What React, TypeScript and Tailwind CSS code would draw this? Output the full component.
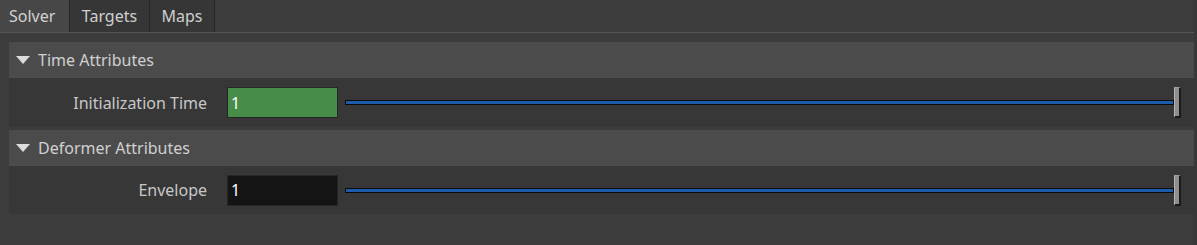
import React from "react";

const font = { fontFamily: '"Noto Sans", "Open Sans", sans-serif' };

function Slider() {
  return (
    <div className="flex-1 flex items-center h-[30px] pl-[7px] pr-[13px]">
      <div className="flex-1 h-[5px] bg-[#1d5cab] border border-[#0b0b0b]" />
      <div className="w-[7px] h-[31px] bg-[#8e8e8e] border-l border-l-[#b5b5b5] border-r-2 border-r-[#1a1a1a] border-b-2 border-b-[#1a1a1a] border-t border-t-[#9a9a9a]" />
    </div>
  );
}

function Header({ title }: { title: string }) {
  return (
    <div className="h-[36px] bg-[#4b4b4b] flex items-center">
      <svg width="14" height="9" viewBox="0 0 14 9" className="ml-[7px] mr-[8px]">
        <polygon points="0,0 14,0 7,8" fill="#dcdcdc" />
      </svg>
      <span className="text-[16px] text-[#d0d0d0]">{title}</span>
    </div>
  );
}

function Row({ label, green, h }: { label: string; green?: boolean; h: string }) {
  return (
    <div className={`${h} bg-[#373737] flex items-center`}>
      <div className="w-[198px] text-right text-[16px] text-[#c8c8c8]">{label}</div>
      <div
        className={`ml-[20px] w-[111px] h-[31px] border border-[#262626] flex items-center pl-[3px] text-[16px] text-white ${
          green ? "bg-[#478c49]" : "bg-[#141414]"
        }`}
      >
        1
      </div>
      <Slider />
    </div>
  );
}

export default function App() {
  return (
    <div className="w-[1197px] h-[245px] bg-[#3c3c3c] flex" style={font}>
      <div className="w-[1194px] flex flex-col">
        <div className="h-[32px] flex">
          <div className="w-[69px] bg-[#474747] flex items-center pl-[9px] text-[16px] text-[#d2d2d2]">Solver</div>
          <div className="w-[81px] bg-[#363636] border-x border-[#262626] flex items-center justify-center text-[16px] text-[#cfcfcf]">Targets</div>
          <div className="w-[65px] bg-[#363636] border-r border-[#262626] flex items-center justify-center text-[16px] text-[#cfcfcf]">Maps</div>
        </div>
        <div className="h-px bg-[#565656]" />
        <div className="pl-[9px] pt-[9px] flex flex-col">
          <Header title="Time Attributes" />
          <Row label="Initialization Time" green h="h-[49px]" />
          <div className="h-[3px]" />
          <Header title="Deformer Attributes" />
          <Row label="Envelope" h="h-[48px]" />
        </div>
      </div>
      <div className="w-[3px] bg-[#383838]" />
    </div>
  );
}
